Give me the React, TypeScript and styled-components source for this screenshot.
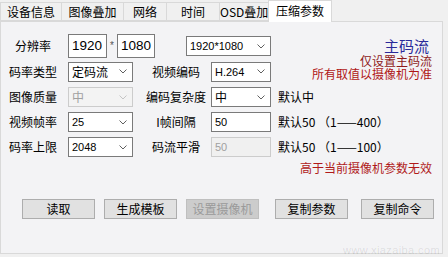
import React from "react";
import styled, { createGlobalStyle } from "styled-components";

const GlobalStyle = createGlobalStyle`
  html, body { margin: 0; padding: 0; background: #f0f0f0; }
  body { font-family: "Noto Sans CJK SC", "Liberation Sans", sans-serif; color: #000; }
  * { box-sizing: border-box; }
`;

const Root = styled.div`
  width: 448px;
  height: 257px;
  background: #f0f0f0;
  overflow: hidden;
`;

const TabStrip = styled.div`
  display: flex;
  align-items: flex-end;
  height: 21px;
  position: relative;
  z-index: 2;
`;

const Tab = styled.div<{ $w: number; $active?: boolean }>`
  width: ${(p) => p.$w}px;
  height: ${(p) => (p.$active ? 22 : 19)}px;
  margin-bottom: ${(p) => (p.$active ? -1 : 0)}px;
  margin-left: -1px;
  border: 1px solid #d9d9d9;
  border-bottom: ${(p) => (p.$active ? "none" : "1px solid #d9d9d9")};
  background: ${(p) => (p.$active ? "#ffffff" : "#f0f0f0")};
  font-size: 12px;
  line-height: ${(p) => (p.$active ? 20 : 17)}px;
  text-align: center;
  white-space: nowrap;
  position: relative;
  &:first-child { margin-left: 0; }
`;

const Panel = styled.div`
  width: 443px;
  height: 233px;
  border: 1px solid #d9d9d9;
  background: #f3f3f5;
  padding-top: 11px;
  position: relative;
  z-index: 1;
`;

const FormGrid = styled.div`
  display: grid;
  grid-template-columns: 60px 65px 78px 60px 1fr;
  grid-template-rows: 26px 25px 26px 24px 26px;
  padding-left: 7px;
  align-items: center;
`;

const Label = styled.div<{ $second?: boolean }>`
  font-size: 12px;
  line-height: 16px;
  text-align: center;
  white-space: nowrap;
  padding-left: ${(p) => (p.$second ? 8 : 0)}px;
  padding-right: ${(p) => (p.$second ? 0 : 10)}px;
`;

const ResolutionCell = styled.div`
  grid-column: 2 / 5;
  display: flex;
  align-items: center;
`;

const NumInput = styled.div<{ $w: number }>`
  width: ${(p) => p.$w}px;
  height: 24px;
  border: 1px solid #7a7a7a;
  background: #fff;
  font-family: "Liberation Sans", sans-serif;
  font-size: 13.5px;
  line-height: 22px;
  padding-left: 3px;
`;

const Star = styled.div`
  width: 10px;
  text-align: center;
  font-family: "Liberation Sans", sans-serif;
  font-size: 10px;
  color: #555;
  line-height: 10px;
`;

const ComboBox = styled.div<{ $w?: number; $disabled?: boolean; $ml?: number }>`
  width: ${(p) => (p.$w ? `${p.$w}px` : "100%")};
  margin-left: ${(p) => p.$ml ?? 0}px;
  height: 20px;
  display: flex;
  align-items: center;
  justify-content: space-between;
  border: 1px solid ${(p) => (p.$disabled ? "#cccccc" : "#7a7a7a")};
  background: ${(p) => (p.$disabled ? "#f3f3f3" : "#ffffff")};
  padding: 0 5px 0 3px;
  color: ${(p) => (p.$disabled ? "#a0a0a0" : "#000")};
`;

const Value = styled.span<{ $latin?: boolean }>`
  font-family: ${(p) =>
    p.$latin ? `"Liberation Sans", sans-serif` : `"Noto Sans CJK SC", sans-serif`};
  font-size: ${(p) => (p.$latin ? 11 : 12)}px;
  line-height: 16px;
  white-space: nowrap;
`;

const TextBox = styled.div<{ $disabled?: boolean }>`
  width: 100%;
  height: 20px;
  border: 1px solid ${(p) => (p.$disabled ? "#cccccc" : "#7a7a7a")};
  background: ${(p) => (p.$disabled ? "#f0f0f0" : "#ffffff")};
  color: ${(p) => (p.$disabled ? "#a0a0a0" : "#000")};
  padding-left: 3px;
  display: flex;
  align-items: center;
`;

const Hint = styled.div`
  font-size: 12px;
  line-height: 16px;
  padding-left: 7px;
  white-space: pre;
`;

const NoteCell = styled.div`
  grid-column: 5;
  grid-row: 1 / 3;
  align-self: start;
  display: flex;
  flex-direction: column;
  align-items: flex-end;
  padding-right: 10px;
  padding-top: 4px;
`;

const Note = styled.div<{ $color: string; $size: number; $lh: number; $pr?: number }>`
  color: ${(p) => p.$color};
  font-size: ${(p) => p.$size}px;
  line-height: ${(p) => p.$lh}px;
  height: ${(p) => p.$lh}px;
  padding-right: ${(p) => p.$pr ?? 0}px;
  white-space: nowrap;
`;

const Warning = styled.div`
  height: 16px;
  font-size: 12px;
  line-height: 16px;
  color: #b01a1a;
  text-align: right;
  padding-right: 10px;
`;

const ButtonRow = styled.div`
  display: flex;
  margin-top: 23px;
  padding-left: 21px;
  gap: 9px;
`;

const Button = styled.div<{ $disabled?: boolean; $ml?: number }>`
  width: 73px;
  height: 20px;
  margin-left: ${(p) => p.$ml ?? 0}px;
  border: 1px solid ${(p) => (p.$disabled ? "#bfbfbf" : "#adadad")};
  background: ${(p) => (p.$disabled ? "#cccccc" : "#e1e1e1")};
  color: ${(p) => (p.$disabled ? "#9a9a9a" : "#000")};
  font-size: 12px;
  line-height: 18px;
  text-align: center;
`;

const Watermark = styled.div`
  position: absolute;
  right: 2px;
  bottom: -3px;
  font-family: "Liberation Sans", sans-serif;
  font-size: 11px;
  letter-spacing: 0.4px;
  color: rgba(0, 0, 0, 0.1);
  pointer-events: none;
`;

const Chevron = ({ disabled }: { disabled?: boolean }) => (
  <svg width="8" height="5" viewBox="0 0 8 5">
    <polyline
      points="0.5,0.5 4,4 7.5,0.5"
      fill="none"
      stroke={disabled ? "#c4c4c4" : "#606060"}
      strokeWidth="1"
    />
  </svg>
);

const isLatin = (s: string) => /^[\x00-\x7f]+$/.test(s);

const Combo = ({ value, w, disabled, ml }: { value: string; w?: number; disabled?: boolean; ml?: number }) => (
  <ComboBox $w={w} $disabled={disabled} $ml={ml}>
    <Value $latin={isLatin(value)}>{value}</Value>
    <Chevron disabled={disabled} />
  </ComboBox>
);

const tabs = [
  { t: "设备信息", w: 62 },
  { t: "图像叠加", w: 63 },
  { t: "网络", w: 44 },
  { t: "时间", w: 54 },
  { t: "OSD叠加", w: 50 },
  { t: "压缩参数", w: 64, active: true },
];

export default function App() {
  return (
    <Root>
      <GlobalStyle />
      <TabStrip>
        {tabs.map((x) => (
          <Tab key={x.t} $w={x.w} $active={x.active}>
            {x.t}
          </Tab>
        ))}
      </TabStrip>
      <Panel>
        <FormGrid>
          <Label>分辨率</Label>
          <ResolutionCell>
            <NumInput $w={39}>1920</NumInput>
            <Star>*</Star>
            <NumInput $w={38}>1080</NumInput>
            <Combo value="1920*1080" w={85} ml={31} />
          </ResolutionCell>
          <NoteCell>
            <Note $color="#2a2a9a" $size={15} $lh={17} $pr={3}>主码流</Note>
            <Note $color="#8e1a1a" $size={12} $lh={13}>仅设置主码流</Note>
            <Note $color="#b01616" $size={12} $lh={14} $pr={-3}>所有取值以摄像机为准</Note>
          </NoteCell>

          <Label>码率类型</Label>
          <Combo value="定码流" />
          <Label $second>视频编码</Label>
          <Combo value="H.264" />

          <Label>图像质量</Label>
          <Combo value="中" disabled />
          <Label $second>编码复杂度</Label>
          <Combo value="中" />
          <Hint>默认中</Hint>

          <Label>视频帧率</Label>
          <Combo value="25" />
          <Label $second>I帧间隔</Label>
          <TextBox>
            <Value $latin>50</Value>
          </TextBox>
          <Hint>{"默认50 （1——400）"}</Hint>

          <Label>码率上限</Label>
          <Combo value="2048" />
          <Label $second>码流平滑</Label>
          <TextBox $disabled>
            <Value $latin>50</Value>
          </TextBox>
          <Hint>{"默认50 （1——100）"}</Hint>
        </FormGrid>
        <Warning>高于当前摄像机参数无效</Warning>
        <ButtonRow>
          <Button>读取</Button>
          <Button>生成模板</Button>
          <Button $disabled>设置摄像机</Button>
          <Button $ml={7}>复制参数</Button>
          <Button $ml={4}>复制命令</Button>
        </ButtonRow>
        <Watermark>www.xiazaiba.com</Watermark>
      </Panel>
    </Root>
  );
}
